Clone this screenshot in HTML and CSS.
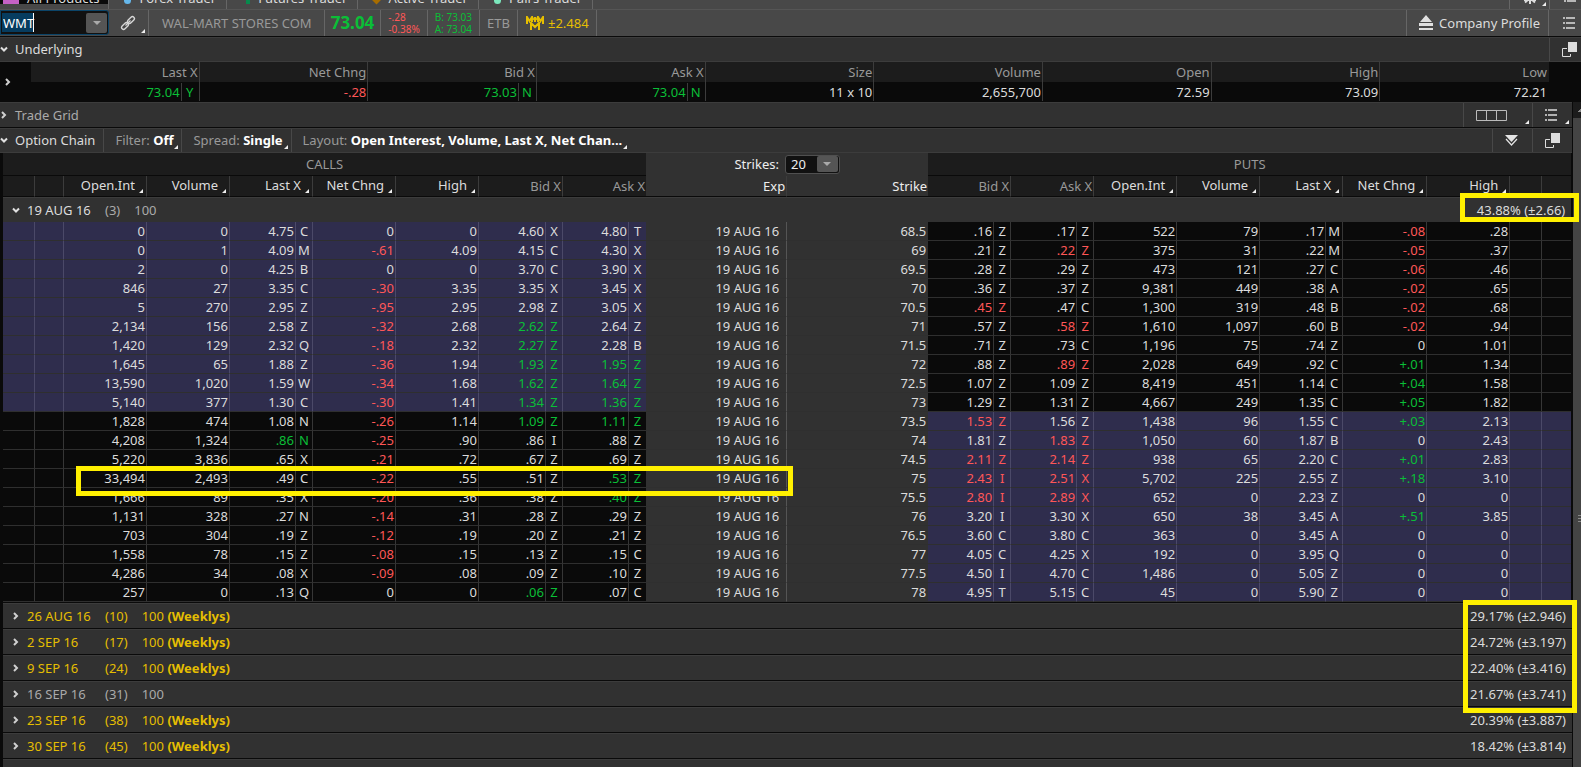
FILE: index.html
```html
<!DOCTYPE html>
<html lang="en">
<head>
<meta charset="utf-8">
<title>WMT Option Chain</title>
<link rel="stylesheet" href="styles.css">
</head>
<body>
<svg class="defs" aria-hidden="true">
  <symbol id="right" viewBox="0 0 8 8"><path d="M2 1l3 3-3 3" fill="none" stroke="#d0d0d0" stroke-width="2"/></symbol>
  <symbol id="down" viewBox="0 0 8 8"><path d="M1 2.500l3 3 3-3" fill="none" stroke="#e0e0e0" stroke-width="2"/></symbol>
  <symbol id="list" viewBox="0 0 12 12"><path d="M0 1h2M3 1h9M0 6h2M3 6h9M0 11h2M3 11h9" stroke="#ddd" stroke-width="1.400"/></symbol>
  <symbol id="popout" viewBox="0 0 16 16"><path d="M5 6.500H.5v8h8V12" fill="none" stroke="#ddd" stroke-width="1"/><path d="M6 0h9v10H6z" fill="#ddd"/></symbol>
</svg>

<nav class="tabs">
  <button class="tab tab-active"><i class="dot square"></i>All Products</button>
  <button class="tab"><i class="dot blue"></i>Forex Trader</button>
  <button class="tab tab-futures"><i class="dot green"></i>Futures Trader</button>
  <button class="tab"><i class="dot diamond"></i>Active Trader</button>
  <button class="tab"><i class="dot mint"></i>Pairs Trader</button>
  <span class="grow"></span>
  <button class="tab-tool corner" aria-label="Settings"><svg width="12" height="12" viewBox="0 0 12 12"><path d="M6 0v12M1 10.500L6 6l5 4.500M0 8h12" stroke="#ddd" stroke-width="2" fill="none"/></svg></button>
  <button class="tab-tool" aria-label="Menu"><svg width="12" height="12"><use href="#list"/></svg></button>
</nav>

<header class="toolbar">
  <div class="symbol">
    <input class="symbol-input" aria-label="Symbol" value="WMT">
    <button class="drop" aria-label="Symbol list"><i></i></button>
  </div>
  <button class="item link corner" aria-label="Link"><svg width="16" height="16" viewBox="0 0 16 16" fill="none" stroke="#d8d8d8" stroke-width="1.300"><rect x="-4" y="-2" width="8" height="4" rx="2" transform="translate(5 11) rotate(-45)"/><rect x="-4" y="-2" width="8" height="4" rx="2" transform="translate(11 5) rotate(-45)"/><path d="M5.500 10.500l5-5"/></svg></button>
  <span class="item name">WAL-MART STORES COM</span>
  <strong class="item price up">73.04</strong>
  <span class="item small change down"><span>-.28</span><span>-0.38%</span></span>
  <span class="item small up"><span>B: 73.03</span><span>A: 73.04</span></span>
  <span class="item etb">ETB</span>
  <span class="item move"><svg width="18" height="14" viewBox="0 0 18 14" fill="none" stroke="#e5be01" stroke-width="2"><path d="M1 8V1l2.500 4L6 1v5M12 6V1l2.500 4L17 1v7M6 1l1.500 3M12 1l-1.500 3M9 1v5M5 14V7l4 4 4-4v7"/></svg>±2.484</span>
  <span class="grow"></span>
  <button class="item profile"><svg width="14" height="16" viewBox="0 0 14 16" fill="#e0e0e0"><path d="M7 0l6 7H1zM0 8h14v3H0zM0 13h14v2H0z"/></svg>Company Profile</button>
  <button class="item tool" aria-label="Menu"><svg width="12" height="12"><use href="#list"/></svg></button>
</header>

<section class="bar short">
  <button class="title"><svg width="8" height="8"><use href="#down"/></svg>Underlying</button>
  <span class="grow"></span>
  <button class="tool" aria-label="Pop out"><svg width="16" height="16"><use href="#popout"/></svg></button>
</section>

<div class="quote">
  <button class="expand" aria-label="Expand quote"><svg width="8" height="8"><use href="#right"/></svg></button>
  <table class="quote-table">
    <thead><tr><th>Last X</th><th>Net Chng</th><th>Bid X</th><th>Ask X</th><th>Size</th><th>Volume</th><th>Open</th><th>High</th><th>Low</th></tr></thead>
    <tbody><tr>
      <td class="up">73.04<span class="ex">Y</span></td><td class="down">-.28</td>
      <td class="up">73.03<span class="ex">N</span></td><td class="up">73.04<span class="ex">N</span></td>
      <td>11 x 10</td><td>2,655,700</td><td>72.59</td><td>73.09</td><td>72.21</td>
    </tr></tbody>
  </table>
</div>

<div class="lower">
  <main class="main">
    <section class="bar">
      <button class="title dim"><svg width="8" height="8"><use href="#right"/></svg>Trade Grid</button>
      <span class="grow"></span>
      <button class="tool grid-tool corner" aria-label="Grid layout"><svg width="31" height="11" viewBox="0 0 31 11"><path d="M.5.5h30v10H.5zM10.500.5v10M20.500.5v10" fill="none" stroke="#bbb"/></svg></button>
      <button class="tool chain-tool corner" aria-label="Menu"><svg width="12" height="12"><use href="#list"/></svg></button>
    </section>
    <section class="bar short">
      <button class="title"><svg width="8" height="8"><use href="#down"/></svg>Option Chain</button>
      <button class="option corner">Filter: <b>Off</b></button>
      <button class="option corner">Spread: <b>Single</b></button>
      <button class="option corner">Layout: <b>Open Interest, Volume, Last X, Net Chan...</b></button>
      <span class="grow"></span>
      <button class="tool chain-tool" aria-label="Collapse"><svg width="13" height="12" viewBox="0 0 13 12"><path d="M0 0h13L6.500 7z" fill="#e4e4e4"/><path d="M1 4l5.500 6L12 4" fill="none" stroke="#e4e4e4" stroke-width="1.200"/></svg></button>
      <button class="tool chain-tool" aria-label="Pop out"><svg width="16" height="16"><use href="#popout"/></svg></button>
    </section>

    <table class="chain">
      <colgroup>
        <col class="c32"><col class="c29"><col class="c83"><col class="c83"><col class="c66"><col class="c17"><col class="c83"><col class="c83"><col class="c67"><col class="c17"><col class="c66"><col class="c17">
        <col class="c141"><col class="c141">
        <col class="c66"><col class="c17"><col class="c66"><col class="c17"><col class="c83"><col class="c83"><col class="c66"><col class="c17"><col class="c84"><col class="c83"><col class="c32"><col class="c29">
      </colgroup>
      <thead>
        <tr class="sides">
          <th colspan="12">CALLS</th>
          <th colspan="2" class="mid"><div class="strikes"><label for="strikes">Strikes:</label><span class="pick"><select id="strikes"><option>20</option></select><span class="drop"><i></i></span></span></div></th>
          <th colspan="12">PUTS</th>
        </tr>
        <tr class="heads">
          <th></th><th></th><th class="sort">Open.Int</th><th class="sort">Volume</th><th class="sort" colspan="2">Last X</th><th class="sort">Net Chng</th><th class="sort">High</th><th colspan="2">Bid X</th><th colspan="2" class="edge">Ask X</th>
          <th class="mid">Exp</th><th class="mid edge">Strike</th>
          <th colspan="2">Bid X</th><th colspan="2">Ask X</th><th class="sort">Open.Int</th><th class="sort">Volume</th><th class="sort" colspan="2">Last X</th><th class="sort">Net Chng</th><th class="sort">High</th><th></th><th class="edge"></th>
        </tr>
        <tr class="series-row"><th colspan="26"><div class="series open"><svg width="8" height="8"><use href="#down"/></svg><span class="date">19 AUG 16</span><span>(3)</span><span>100</span><span class="iv">43.88% (±2.66)</span></div></th></tr>
      </thead>
      <tbody id="rows"></tbody>
    </table>

    <div class="series weekly"><svg width="8" height="8"><use href="#right"/></svg><span class="date">26 AUG 16</span><span>(10)</span><span>100 <b>(Weeklys)</b></span><span class="iv">29.17% (±2.946)</span></div>
    <div class="series weekly"><svg width="8" height="8"><use href="#right"/></svg><span class="date">2 SEP 16</span><span>(17)</span><span>100 <b>(Weeklys)</b></span><span class="iv">24.72% (±3.197)</span></div>
    <div class="series weekly"><svg width="8" height="8"><use href="#right"/></svg><span class="date">9 SEP 16</span><span>(24)</span><span>100 <b>(Weeklys)</b></span><span class="iv">22.40% (±3.416)</span></div>
    <div class="series"><svg width="8" height="8"><use href="#right"/></svg><span class="date">16 SEP 16</span><span>(31)</span><span>100</span><span class="iv">21.67% (±3.741)</span></div>
    <div class="series weekly"><svg width="8" height="8"><use href="#right"/></svg><span class="date">23 SEP 16</span><span>(38)</span><span>100 <b>(Weeklys)</b></span><span class="iv">20.39% (±3.887)</span></div>
    <div class="series weekly"><svg width="8" height="8"><use href="#right"/></svg><span class="date">30 SEP 16</span><span>(45)</span><span>100 <b>(Weeklys)</b></span><span class="iv">18.42% (±3.814)</span></div>
    <div class="series"></div>
  </main>
  <div class="scroll"><span class="scroll-up"></span><span class="scroll-thumb"><i></i></span></div>
</div>

<div class="mark mark-near"></div>
<div class="mark mark-row"></div>
<div class="mark mark-far"></div>
<script src="chain.js"></script>
</body>
</html>
```
FILE: styles.css
```css
* { box-sizing: border-box; }
body {
  margin: 0;
  height: 100vh;
  overflow: hidden;
  display: flex;
  flex-direction: column;
  position: relative;
  background: #0a0a0a;
  color: #dcdcdc;
  font: 13px/18px "Noto Sans", "Open Sans", sans-serif;
}
button, input, select { font: inherit; color: inherit; border: 0; margin: 0; padding: 0; background: none; border-radius: 0; }
svg { display: block; flex: none; }
.defs { position: absolute; width: 0; height: 0; }
.grow { flex: 1; }
.up { color: #0abf37; }
.down { color: #ff5757; }

.corner { position: relative; }
.corner::after, .sort::after {
  content: "";
  position: absolute;
  right: 3px;
  bottom: 3px;
  border-left: 4px solid transparent;
  border-bottom: 4px solid #eee;
}

/* workspace tabs */
.tabs { display: flex; align-items: flex-end; flex: none; height: 9px; overflow: hidden; background: #484848; }
.tab { display: flex; align-items: center; gap: 8px; height: 23px; flex: none; padding: 0 10px 0 15px; border-right: 1px solid #666; white-space: nowrap; }
.tab-active { background: linear-gradient(#0a0a0a, #0a0a0a) no-repeat 0 0 / 100% 18px; padding-left: 3px; padding-right: 9px; }
.dot { width: 7px; height: 7px; border-radius: 50%; margin-top: 6px; }
.square { width: 16px; height: 12px; border-radius: 0; background: #c561c5; margin-top: 0; }
.blue { background: #66b8ec; }
.green { background: #078a4d; width: 4px; border-radius: 0; }
.diamond { background: #a86d00; border-radius: 0; transform: rotate(45deg); margin-top: 4px; }
.mint { background: #7be8bd; }
.tab-futures { padding-left: 19px; }
.tab-tool { width: 40px; height: 23px; border-left: 1px solid #666; display: flex; align-items: center; padding: 0 0 0 14px; flex: none; }
.tab-tool:last-child { width: 32px; padding-bottom: 3px; }

/* symbol toolbar */
.toolbar { display: flex; flex: none; height: 28px; background: #484848; border-top: 1px solid #555; border-bottom: 1px solid #0a0a0a; }
.symbol { display: flex; align-items: center; width: 109px; height: 25px; padding: 1px; background: #111; border: 1px solid #0b4468; border-radius: 0 3px 3px 0; }
.symbol-input { flex: 1; min-width: 0; height: 19px; padding-left: 1px; color: #fff; background: linear-gradient(90deg, #063c5f 31px, #fff 31px, #fff 32px, transparent 32px); }
.drop { display: flex; align-items: center; justify-content: center; width: 21px; height: 20px; background: #555; border-radius: 2px; }
.drop i { border: 4px solid transparent; border-top: 4px solid #aaa; border-bottom: 0; }
.item { display: flex; align-items: center; border-right: 1px solid #666; padding: 0 7px 1px; color: #999; white-space: nowrap; }
.link { width: 40px; padding-left: 11px; }
.name { padding: 0 12px 1px 13px; }
.item.price { font-size: 17px; color: #0abf37; padding: 0 6px; }
.item.small { flex-direction: column; align-items: flex-start; justify-content: center; font-size: 10px; line-height: 12px; }
.item.up { color: #0abf37; }
.item.down { color: #ff5757; }
.item.move { gap: 4px; color: #e5be01; padding-left: 8px; }
.item.profile { gap: 6px; color: #dcdcdc; border-left: 1px solid #666; padding: 0 8px 1px 12px; }
.tool { display: flex; align-items: center; align-self: stretch; width: 32px; border-left: 1px solid #484848; padding-left: 12px; }
.item.tool { border: 0; padding: 0 0 0 14px; }
.chain-tool { width: 40px; }
.grid-tool { width: 69px; }

/* section bars */
.bar { display: flex; align-items: stretch; flex: none; height: 26px; background: #313131; border-top: 1px solid #3c3c3c; border-bottom: 1px solid #0a0a0a; }
.short { height: 25px; border-bottom-color: #3c3c3c; }
.title { display: flex; align-items: center; gap: 7px; padding: 0 8px 1px 0; }
.title.dim { color: #aaa; }
.option { border-left: 1px solid #484848; padding: 0 8px 1px 11px; color: #999; white-space: nowrap; }
.option b { color: #fff; }

/* underlying quote */
.quote { display: flex; flex: none; height: 40px; padding-right: 32px; }
.expand { display: flex; align-items: center; width: 31px; padding-left: 4px; flex: none; }
.quote-table { flex: 1; width: 100%; height: 39px; table-layout: fixed; border-collapse: separate; border-spacing: 0; text-align: right; }
.quote-table th, .quote-table td { padding: 0 1px; height: 19px; line-height: 18px; border-right: 1px solid #3c3c3c; }
.quote-table th { height: 20px; background: #1c1c1c; color: #999; font-weight: 400; text-align: right; }
.quote-table th:last-child, .quote-table td:last-child { border-right-color: transparent; }
.ex { display: inline-block; width: 17px; margin-left: 1px; border-left: 1px solid #3c3c3c; text-align: center; }

/* option chain */
.lower { display: flex; flex: 1; min-height: 0; }
.main { flex: 1; min-width: 0; overflow: hidden; border-right: 1px solid #0a0a0a; }
.chain { width: calc(100% - 4px); margin-left: 3px; table-layout: fixed; border-collapse: separate; border-spacing: 0; text-align: right; }
.c17 { width: 17px; }
.c29 { width: 29px; }
.c32 { width: 32px; }
.c66 { width: 66px; }
.c67 { width: 67px; }
.c83 { width: 83px; }
.c84 { width: 84px; }
.c141 { width: 141px; }
.chain th { padding: 0; font-weight: 400; color: #999; background: #1c1c1c; }
.chain .sides th { height: 23px; text-align: center; border-bottom: 1px solid #0a0a0a; }
.chain .sides .mid { border-bottom-color: #313131; }
.chain .heads th { height: 21px; text-align: right; line-height: 18px; padding-right: 1px; border-right: 1px solid #3c3c3c; border-bottom: 1px solid #0a0a0a; }
.chain .heads .sort { position: relative; padding: 0 11px 2px 0; color: #dcdcdc; }
.chain .heads .edge { border-right: 0; }
.chain .mid, .chain .heads .mid { background: #313131; color: #eee; }
.strikes { display: flex; align-items: center; justify-content: center; gap: 6px; }
.pick { display: flex; align-items: center; width: 55px; height: 19px; padding: 1px; background: #111; border: 1px solid #505050; border-radius: 3px; }
.pick select { appearance: none; flex: 1; min-width: 0; padding-left: 4px; }
.pick .drop { height: 16px; }
.chain td { height: 19px; line-height: 18px; padding: 0 1px 0 0; background: #0a0a0a; border-right: 1px solid #363636; border-bottom: 1px solid #2f2f2f; }
.chain td.in { background: #2f2d4d; border-right-color: #4b4968; }
.chain td.x { text-align: center; padding: 0; }
.chain td.exp, .chain td.strike { background: #313131; border-right-color: #555; }
.chain td.exp { padding-right: 7px; }
.chain td.strike { border-right: 0; padding-right: 2px; }
.chain td.edge { border-right: 0; }
.chain .series { height: 25px; margin: 0; border-bottom: 0; }

/* expiration rows */
.series { display: flex; align-items: center; height: 26px; margin: 0 0 0 3px; padding: 0 6px 1px 9px; background: #313131; border-top: 1px solid #3c3c3c; border-bottom: 1px solid #0a0a0a; color: #aaa; }
.series span { margin-right: 14px; }
.series .date { width: 78px; margin: 0 0 0 7px; text-align: left; }
.series .iv { margin: 0 0 0 auto; color: #dcdcdc; }
.open .date { color: #dcdcdc; }
.chain + .series { margin-top: 1px; }
.weekly { color: #e5be01; }

.scroll { flex: none; width: 8px; background: #444; display: flex; flex-direction: column; }
.scroll-up { height: 16px; background: linear-gradient(135deg, transparent 50%, #888 50%) no-repeat 5px 6px / 4px 4px #1c1c1c; }
.scroll-thumb { flex: 1; display: flex; flex-direction: column; padding: 397px 0 0 5px; }
.scroll-thumb i { height: 7px; background: repeating-linear-gradient(#888 0 1px, transparent 1px 3px); }

/* highlight boxes drawn over the chain */
.mark { position: absolute; border: 5px solid #fff000; pointer-events: none; }
.mark-near { right: 2px; top: 193px; width: 119px; height: 29px; }
.mark-row { left: 76px; top: 466px; width: 717px; height: 30px; }
.mark-far { right: 4px; top: 600px; width: 114px; height: 113px; }
```
FILE: chain.js
```js
// Columns: call OI, volume, last, ex, net, high, bid, ex, ask, ex | strike |
// put bid, ex, ask, ex, OI, volume, last, ex, net, high.
// A trailing "g" or "r" on a price marks an up or down tick.
const rows = `
0 0 4.75 C 0 0 4.60 X 4.80 T|68.5|.16 Z .17 Z 522 79 .17 M -.08 .28
0 1 4.09 M -.61 4.09 4.15 C 4.30 X|69|.21 Z .22r Z 375 31 .22 M -.05 .37
2 0 4.25 B 0 0 3.70 C 3.90 X|69.5|.28 Z .29 Z 473 121 .27 C -.06 .46
846 27 3.35 C -.30 3.35 3.35 X 3.45 X|70|.36 Z .37 Z 9,381 449 .38 A -.02 .65
5 270 2.95 Z -.95 2.95 2.98 Z 3.05 X|70.5|.45r Z .47 C 1,300 319 .48 B -.02 .68
2,134 156 2.58 Z -.32 2.68 2.62g Z 2.64 Z|71|.57 Z .58r Z 1,610 1,097 .60 B -.02 .94
1,420 129 2.32 Q -.18 2.32 2.27g Z 2.28 B|71.5|.71 Z .73 C 1,196 75 .74 Z 0 1.01
1,645 65 1.88 Z -.36 1.94 1.93g Z 1.95g Z|72|.88 Z .89r Z 2,028 649 .92 C +.01 1.34
13,590 1,020 1.59 W -.34 1.68 1.62g Z 1.64g Z|72.5|1.07 Z 1.09 Z 8,419 451 1.14 C +.04 1.58
5,140 377 1.30 C -.30 1.41 1.34g Z 1.36g Z|73|1.29 Z 1.31 Z 4,667 249 1.35 C +.05 1.82
1,828 474 1.08 N -.26 1.14 1.09g Z 1.11g Z|73.5|1.53r Z 1.56 Z 1,438 96 1.55 C +.03 2.13
4,208 1,324 .86g N -.25 .90 .86 I .88 Z|74|1.81 Z 1.83r Z 1,050 60 1.87 B 0 2.43
5,220 3,836 .65 X -.21 .72 .67 Z .69 Z|74.5|2.11r Z 2.14r Z 938 65 2.20 C +.01 2.83
33,494 2,493 .49 C -.22 .55 .51 Z .53g Z|75|2.43r I 2.51r X 5,702 225 2.55 Z +.18 3.10
1,666 89 .35 X -.20 .36 .38 Z .40g Z|75.5|2.80r I 2.89r X 652 0 2.23 Z 0 0
1,131 328 .27 N -.14 .31 .28 Z .29 Z|76|3.20 I 3.30 X 650 38 3.45 A +.51 3.85
703 304 .19 Z -.12 .19 .20 Z .21 Z|76.5|3.60 C 3.80 C 363 0 3.45 A 0 0
1,558 78 .15 Z -.08 .15 .13 Z .15 C|77|4.05 C 4.25 X 192 0 3.95 Q 0 0
4,286 34 .08 X -.09 .08 .09 Z .10 Z|77.5|4.50 I 4.70 C 1,486 0 5.05 Z 0 0
257 0 .13 Q 0 0 .06g Z .07 C|78|4.95 T 5.15 C 45 0 5.90 Z 0 0`;

const SPOT = 73.04;

function cells(text, inMoney, last) {
  let tick = "";
  return text.split(" ").map((value, i, all) => {
    const isEx = /^[A-Z]$/.test(value);
    if (!isEx) {
      tick = /g$|^\+/.test(value) ? "up" : /r$|^-/.test(value) ? "down" : "";
    }
    const names = [inMoney ? "in" : "", isEx ? "x" : "", tick,
      last && i === all.length - 1 ? "edge" : ""];
    return `<td class="${names.join(" ").trim()}">${value.replace(/[gr]$/, "")}</td>`;
  }).join("");
}

document.getElementById("rows").innerHTML = rows.trim().split("\n").map(line => {
  const [calls, strike, puts] = line.split("|");
  const callIn = strike < SPOT;
  const blank = on => `<td class="${on ? "in" : ""}"></td>`;
  return `<tr>${blank(callIn)}${blank(callIn)}${cells(calls, callIn, true)}` +
    `<td class="exp">19 AUG 16</td><td class="strike">${strike}</td>` +
    `${cells(puts, !callIn, false)}${blank(!callIn)}<td class="edge ${callIn ? "" : "in"}"></td></tr>`;
}).join("");
```
